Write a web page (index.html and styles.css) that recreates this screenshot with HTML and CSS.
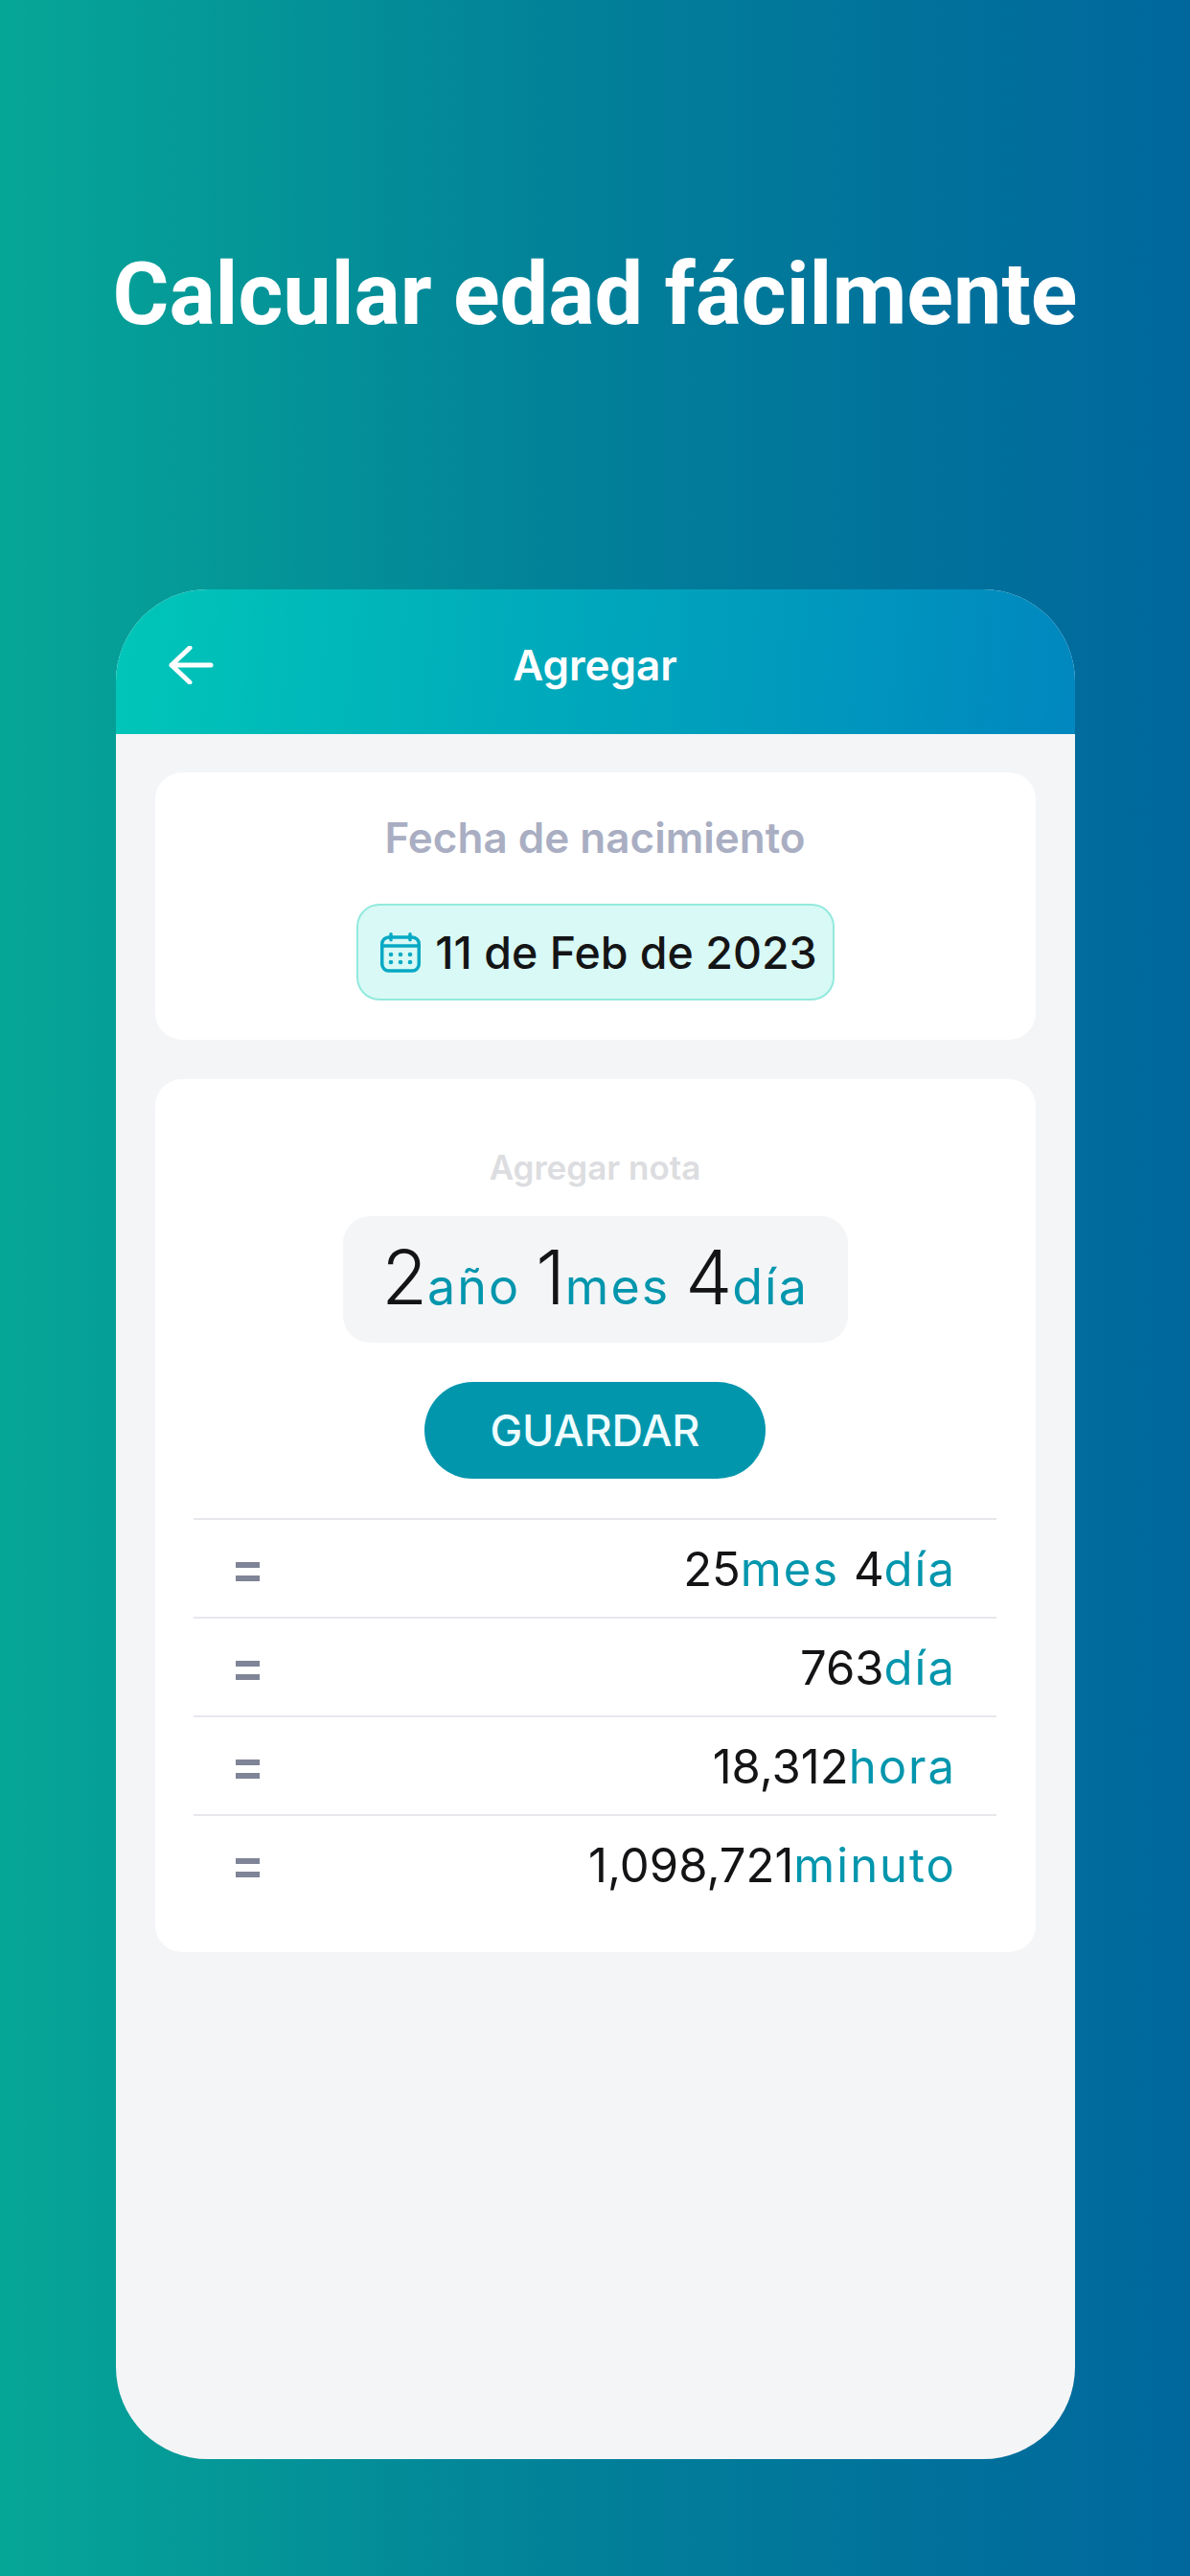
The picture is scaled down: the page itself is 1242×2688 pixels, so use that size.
FILE: index.html
```html
<!DOCTYPE html>
<html lang="es">
<head>
    <meta charset="UTF-8">
    <meta name="viewport" content="width=device-width, initial-scale=1.0">
    <title>Calcular edad</title>
    <link rel="stylesheet" href="styles.css">
</head>
<body>
    <h1 class="headline">Calcular edad fácilmente</h1>

    <div class="phone">
        <header class="app-bar">
            <svg class="back-icon" viewBox="0 0 48 40" fill="none" stroke="#fff" stroke-width="5" stroke-linecap="round" stroke-linejoin="round">
                <path d="M23 2 4 20l19 18M4 20h41"/>
            </svg>
            <span class="app-title">Agregar</span>
        </header>

        <div class="content">
            <section class="card birth-card">
                <div class="birth-label">Fecha de nacimiento</div>
                <div class="date-chip">
                    <svg class="calendar-icon" viewBox="0 0 42 42" fill="none" stroke="#07a9c4" stroke-width="3.500" stroke-linecap="round">
                        <rect x="1.750" y="5" width="38.500" height="35" rx="7"/>
                        <path d="M2 14h38M11 1.750v6M31 1.750v6"/>
                        <g fill="#07a9c4" stroke="none">
                            <circle cx="11" cy="23" r="2.300"/><circle cx="21" cy="23" r="2.300"/><circle cx="31" cy="23" r="2.300"/>
                            <circle cx="11" cy="31" r="2.300"/><circle cx="21" cy="31" r="2.300"/><circle cx="31" cy="31" r="2.300"/>
                        </g>
                    </svg>
                    <span>11 de Feb de 2023</span>
                </div>
            </section>

            <section class="card result-card">
                <div class="note">Agregar nota</div>
                <div class="age-box">
                    <span class="big">2</span><span class="unit">año</span>
                    <span class="big">1</span><span class="unit">mes</span>
                    <span class="big">4</span><span class="unit">día</span>
                </div>
                <button class="save">GUARDAR</button>

                <div class="rows">
                    <div class="row">
                        <span class="equals"></span>
                        <span class="value">25<span class="unit">mes</span> <span class="gap">4</span><span class="unit">día</span></span>
                    </div>
                    <div class="row">
                        <span class="equals"></span>
                        <span class="value">763<span class="unit">día</span></span>
                    </div>
                    <div class="row">
                        <span class="equals"></span>
                        <span class="value">18,312<span class="unit">hora</span></span>
                    </div>
                    <div class="row">
                        <span class="equals"></span>
                        <span class="value">1,098,721<span class="unit">minuto</span></span>
                    </div>
                </div>
            </section>
        </div>
    </div>
</body>
</html>
```

FILE: styles.css
```css
* {
    box-sizing: border-box;
}

body {
    margin: 0;
    width: 1242px;
    height: 2688px;
    overflow: hidden;
    font-family: Inter, "Noto Sans", sans-serif;
    background: linear-gradient(90deg, #06a697 0%, #027f99 50%, #00679d 100%);
    display: flex;
    flex-direction: column;
    align-items: center;
}

.headline {
    margin: 255px 0 0;
    height: 360px;
    font-family: Roboto, sans-serif;
    font-size: 90px;
    line-height: 106px;
    font-weight: 700;
    color: #fff;
}

.phone {
    width: 1001px;
    height: 1951px;
    border-radius: 96px;
    background: #f4f5f7;
    overflow: hidden;
}

.app-bar {
    height: 151px;
    padding: 6px 0 0 54px;
    display: flex;
    align-items: center;
    position: relative;
    background: linear-gradient(95deg, #00c6b8 0%, #0087bf 100%);
}

.back-icon {
    width: 48px;
    height: 40px;
}

.app-title {
    position: absolute;
    left: 0;
    right: 0;
    text-align: center;
    font-size: 44px;
    font-weight: 600;
    color: #fff;
}

.content {
    padding: 40px 41px 0;
    display: flex;
    flex-direction: column;
    gap: 41px;
}

.card {
    background: #fff;
    border-radius: 28px;
    display: flex;
    flex-direction: column;
    align-items: center;
}

.birth-card {
    height: 279px;
    padding-top: 42px;
}

.birth-label {
    font-size: 44px;
    line-height: 53px;
    font-weight: 600;
    color: #a9aec2;
}

.date-chip {
    margin-top: 42px;
    width: 499px;
    height: 101px;
    padding-left: 8px;
    border: 2px solid #93e9dd;
    border-radius: 24px;
    background: #d8f9f5;
    display: flex;
    align-items: center;
    justify-content: center;
    gap: 15px;
    font-size: 46.500px;
    font-weight: 500;
    color: #141416;
}

.calendar-icon {
    width: 42px;
    height: 42px;
}

.result-card {
    height: 911px;
    padding-top: 72px;
}

.note {
    font-size: 35px;
    line-height: 40px;
    font-weight: 600;
    color: #dcdde0;
}

.age-box {
    margin-top: 31px;
    width: 527px;
    height: 132px;
    border-radius: 28px;
    background: #f4f5f7;
    display: flex;
    align-items: baseline;
    justify-content: center;
    padding-top: 18px;
    font-size: 52px;
    color: #141416;
}

.big {
    font-size: 78px;
    font-weight: 350;
    line-height: 92px;
}

.unit {
    color: #0296ad;
    font-weight: 400;
    letter-spacing: 2px;
}

.age-box .unit {
    margin-right: 16px;
}

.age-box .unit:last-child {
    margin-right: 0;
}

.save {
    margin-top: 41px;
    width: 356px;
    height: 101px;
    border: none;
    border-radius: 52px;
    background: #0296ad;
    font-family: inherit;
    font-size: 45px;
    font-weight: 500;
    color: #effdff;
}

.rows {
    margin-top: 41px;
    width: 838px;
}

.row {
    height: 103px;
    padding: 2px 42px 0 44px;
    border-top: 2px solid #e6e8ec;
    display: flex;
    align-items: center;
    justify-content: space-between;
}

.equals {
    width: 25px;
    height: 20px;
    margin-top: 4px;
    border-top: 6px solid #7f8497;
    border-bottom: 6px solid #7f8497;
}

.value {
    font-size: 49px;
    font-weight: 400;
    color: #141416;
}

.gap {
    margin-left: 1px;
}
```
